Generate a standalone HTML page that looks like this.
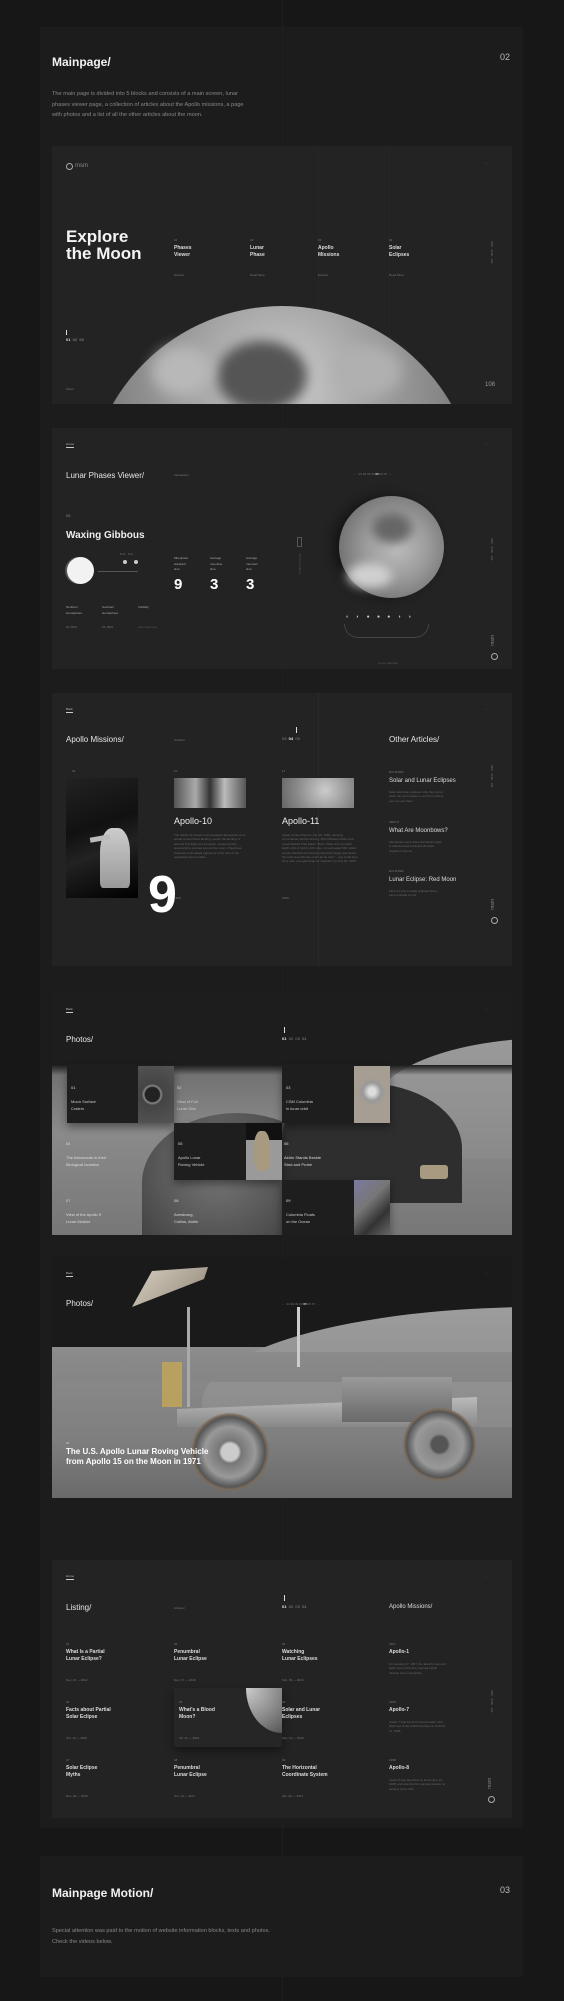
<!DOCTYPE html>
<html><head><meta charset="utf-8">
<style>
*{margin:0;padding:0;box-sizing:border-box}
body{width:564px;height:2001px;background:#171717;font-family:"Liberation Sans",sans-serif;color:#ddd;position:relative;overflow:hidden}
.a{position:absolute}
.band{position:absolute;left:40px;width:483px;background:#1c1c1c}
.card{position:absolute;left:52px;width:460px;background:#232323;overflow:hidden}
.vl{position:absolute;top:0;bottom:0;width:1px;background:#2a2a2a}
.t{position:absolute;white-space:nowrap}
.s3{font-size:3px;color:#777}
.s4{font-size:4px;color:#888}
.s5{font-size:5px;color:#ddd;line-height:7px;font-weight:bold}
.h8{font-size:8px;color:#e6e6e6}
.p{font-size:3px;color:#666;line-height:4.4px;white-space:normal}
.tile{position:absolute;background:#1e1e1e;box-shadow:0 4px 8px rgba(0,0,0,.4)}
.ul{border-bottom:1px solid #ccc;padding-bottom:1px}
</style></head><body>

<div class="band" style="top:27px;height:1801px"></div>
<div class="a" style="left:282px;top:0;width:1px;height:2001px;background:#1f1f1f"></div>
<div class="band" style="top:1856px;height:121px"></div>

<!-- header 1 -->
<div class="t" style="left:52px;top:55px;font-size:12px;font-weight:bold;color:#f2f2f2">Mainpage/</div>
<div class="t" style="left:500px;top:52px;font-size:9px;color:#bbb">02</div>
<div class="a p" style="left:52px;top:89px;width:200px;font-size:5.6px;line-height:10.5px;color:#888">The main page is divided into 5 blocks and consists of a main screen, lunar phases viewer page, a collection of articles about the Apollo missions, a page with photos and a list of all the other articles about the moon.</div>

<!-- card1 -->
<div class="card" style="top:146px;height:258px">
 <div class="vl" style="left:266px;background:#262626"></div>
 <div class="vl" style="left:337px;background:#262626"></div>
 <div class="a" style="left:14px;top:17px;width:7px;height:7px;border:1px solid #aaa;border-radius:50%"></div>
 <div class="t" style="left:23px;top:17px;font-size:6px;color:#888">msm</div>
 <div class="t s3" style="left:433px;top:15px">◦ ◦</div>
 <div class="t" style="left:14px;top:82px;font-size:17px;font-weight:bold;line-height:17px;color:#f4f4f4;white-space:normal;width:80px">Explore the Moon</div>
 <div class="t s3" style="left:122px;top:92px">01</div><div class="t s5" style="left:122px;top:99px">Phases<br>Viewer</div><div class="t s3" style="left:122px;top:127px">Explore</div>
 <div class="t s3" style="left:198px;top:92px">02</div><div class="t s5" style="left:198px;top:99px">Lunar<br>Phase</div><div class="t s3" style="left:198px;top:127px">Read More</div>
 <div class="t s3" style="left:266px;top:92px">03</div><div class="t s5" style="left:266px;top:99px">Apollo<br>Missions</div><div class="t s3" style="left:266px;top:127px">Explore</div>
 <div class="t s3" style="left:337px;top:92px">04</div><div class="t s5" style="left:337px;top:99px">Solar<br>Eclipses</div><div class="t s3" style="left:337px;top:127px">Read More</div>
 <div class="a" style="left:14px;top:184px;width:1px;height:5px;background:#ddd"></div>
 <div class="t" style="left:14px;top:191px;font-size:4px;color:#ddd;font-weight:bold">01 <span style="color:#777">&nbsp;02 &nbsp;03</span></div>
 <div class="t s3" style="left:14px;top:241px">About</div>
 <div class="t" style="left:433px;top:236px;font-size:6px;color:#999">108</div>
 <div class="t s3" style="left:438px;top:95px;writing-mode:vertical-rl">SEP · AUG · JUL</div>
 <div class="a" style="left:35px;top:160px;width:390px;height:390px;border-radius:50%;background:radial-gradient(circle at 50% 20%,#cfcfcf 0,#9a9a9a 30%,#6d6d6d 60%,#4a4a4a 100%)"></div>
 <div class="a" style="left:165px;top:195px;width:90px;height:70px;border-radius:50%;background:#555;filter:blur(6px)"></div>
 <div class="a" style="left:100px;top:200px;width:60px;height:50px;border-radius:50%;background:#b8b8b8;filter:blur(7px)"></div>
 <div class="a" style="left:280px;top:200px;width:70px;height:50px;border-radius:50%;background:#b0b0b0;filter:blur(7px)"></div>
</div>

<!-- card2 -->
<div class="card" style="top:428px;height:241px">
 <div class="t s3 ul" style="left:14px;top:14px;color:#bbb">Home</div>
 <div class="t s3" style="left:433px;top:14px">◦ ◦</div>
 <div class="t h8" style="left:14px;top:43px">Lunar Phases Viewer/</div>
 <div class="t s3" style="left:122px;top:45px">Interaction/</div>
 <div class="t s3" style="left:302px;top:44px">←&nbsp; 01 02 03 04 <b style="color:#ddd">05</b> 06 07 &nbsp;→</div>
 <div class="t s4" style="left:14px;top:85px">05</div>
 <div class="t" style="left:14px;top:102px;font-size:10px;font-weight:bold;color:#eee">Waxing Gibbous</div>
 <div class="a" style="left:15px;top:129px;width:27px;height:27px;border-radius:50%;background:#f2f2f2;box-shadow:-2px 0 0 #555"></div>
 <div class="a" style="left:46px;top:143px;width:40px;height:1px;background:#555"></div>
 <div class="t s3" style="left:68px;top:124px">N.H. &nbsp;S.H.</div>
 <div class="a" style="left:71px;top:132px;width:4px;height:4px;border-radius:50%;background:#ccc"></div>
 <div class="a" style="left:82px;top:132px;width:4px;height:4px;border-radius:50%;background:#ccc"></div>
 <div class="t s3" style="left:122px;top:128px;line-height:5.5px;color:#aaa">Mid-phase<br>standard<br>time</div>
 <div class="t s3" style="left:158px;top:128px;line-height:5.5px;color:#aaa">Average<br>moonrise<br>time</div>
 <div class="t s3" style="left:194px;top:128px;line-height:5.5px;color:#aaa">Average<br>moonset<br>time</div>
 <div class="t" style="left:122px;top:148px;font-size:15px;font-weight:bold;color:#fff">9</div>
 <div class="t" style="left:158px;top:148px;font-size:15px;font-weight:bold;color:#fff">3</div>
 <div class="t" style="left:194px;top:148px;font-size:15px;font-weight:bold;color:#fff">3</div>
 <div class="t s3" style="left:14px;top:177px;line-height:5.5px;color:#aaa">Northern<br>Hemisphere</div>
 <div class="t s3" style="left:50px;top:177px;line-height:5.5px;color:#aaa">Southern<br>Hemisphere</div>
 <div class="t s3" style="left:86px;top:177px;color:#aaa">Visibility</div>
 <div class="t s3" style="left:14px;top:197px">51–69%</div><div class="t s3" style="left:50px;top:197px">51–69%</div><div class="t s3" style="left:86px;top:197px;color:#555">Late afternoon</div>
 <div class="a" style="left:245px;top:109px;width:5px;height:10px;border:1px solid #555"></div>
 <div class="t s3" style="left:246px;top:125px;writing-mode:vertical-rl;color:#555">Scroll to explore</div>
 <div class="a" style="left:287px;top:68px;width:105px;height:102px;border-radius:50%;background:radial-gradient(circle at 55% 50%,#bdbdbd 0,#9c9c9c 40%,#6e6e6e 80%,#333 100%);box-shadow:-6px 0 10px #151515"></div>
 <div class="a" style="left:320px;top:85px;width:40px;height:30px;border-radius:50%;background:#666;filter:blur(5px)"></div>
 <div class="a" style="left:295px;top:135px;width:45px;height:25px;border-radius:50%;background:#d0d0d0;filter:blur(5px)"></div>
 <div class="a" style="left:292px;top:196px;width:85px;height:14px;border:1px solid #444;border-top:none;border-radius:0 0 40px 40px"></div>
 <div class="t" style="left:294px;top:186px;font-size:5px;color:#ccc;letter-spacing:7.3px">◐◐●●●◑◑</div>
 <div class="t s3" style="left:377px;top:223px;color:#555">○</div>
 <div class="t s3" style="left:326px;top:233px;color:#555">Lunar calendar</div>
 <div class="t s3" style="left:438px;top:110px;writing-mode:vertical-rl">SEP · AUG · JUL</div>
 <div class="a" style="left:439px;top:225px;width:7px;height:7px;border:1px solid #aaa;border-radius:50%"></div>
 <div class="t" style="left:438px;top:207px;font-size:5px;color:#888;writing-mode:vertical-rl;transform:rotate(180deg)">msm</div>
</div>

<!-- card3 -->
<div class="card" style="top:693px;height:273px">
 <div class="vl" style="left:266px"></div>
 <div class="t s3 ul" style="left:14px;top:14px;color:#bbb">Back</div>
 <div class="t s3" style="left:433px;top:14px">◦ ◦</div>
 <div class="t h8" style="left:14px;top:42px">Apollo Missions/</div>
 <div class="t s3" style="left:122px;top:45px">Articles/</div>
 <div class="a" style="left:244px;top:34px;width:1px;height:6px;background:#ddd"></div>
 <div class="t s4" style="left:230px;top:43px">03 &nbsp;<b style="color:#eee">04</b> &nbsp;05</div>
 <div class="t h8" style="left:337px;top:42px">Other Articles/</div>
 <div class="t s3" style="left:20px;top:76px">09</div>
 <div class="a" style="left:14px;top:85px;width:72px;height:120px;background:linear-gradient(160deg,#222 0,#111 40%,#222 60%,#000 100%)"></div>
 <div class="a" style="left:48px;top:135px;width:30px;height:60px;border-radius:40% 40% 10% 10%;background:linear-gradient(#ccc,#999)"></div>
 <div class="a" style="left:38px;top:143px;width:20px;height:5px;background:#bbb;transform:rotate(-10deg)"></div>
 <div class="t" style="left:96px;top:176px;font-size:52px;font-weight:900;color:#fff;line-height:52px">9</div>
 <div class="t s3" style="left:122px;top:76px">10</div>
 <div class="a" style="left:122px;top:85px;width:72px;height:30px;background:linear-gradient(90deg,#555,#aaa 30%,#333 50%,#bbb 70%,#555)"></div>
 <div class="t" style="left:122px;top:123px;font-size:9px;color:#eee">Apollo-10</div>
 <div class="a p" style="left:122px;top:140px;width:72px">The Apollo 10 mission encompassed all aspects of an actual crewed lunar landing, except the landing. It was the first flight of a complete, crewed Apollo spacecraft to operate around the moon. Objectives included a scheduled eight-hour lunar orbit of the separated lunar module.</div>
 <div class="t s3" style="left:122px;top:203px">1969</div>
 <div class="t s3" style="left:230px;top:76px">11</div>
 <div class="a" style="left:230px;top:85px;width:72px;height:30px;background:radial-gradient(circle at 60% 40%,#ccc,#8a8a8a 60%,#666)"></div>
 <div class="t" style="left:230px;top:123px;font-size:9px;color:#eee">Apollo-11</div>
 <div class="a p" style="left:230px;top:140px;width:76px">Apollo 11 launched on July 16, 1969, carrying Commander Neil Armstrong, Pilot Michael Collins and Lunar Module Pilot Edwin "Buzz" Aldrin into an initial Earth orbit of 114 by 116 miles. An estimated 530 million people watched Armstrong's televised image and heard his voice describe the event as he took "...one small step for a man, one giant leap for mankind" on July 20, 1969.</div>
 <div class="t s3" style="left:230px;top:203px">1969</div>
 <div class="t s3" style="left:337px;top:77px">ECLIPSES</div>
 <div class="t" style="left:337px;top:85px;font-size:6px;color:#ddd">Solar and Lunar Eclipses</div>
 <div class="a p" style="left:337px;top:97px;width:55px">Solar and lunar eclipses: why they occur, when the next eclipse is, and from where you can see them.</div>
 <div class="t s3" style="left:337px;top:127px">ABOUT</div>
 <div class="t" style="left:337px;top:135px;font-size:6px;color:#ddd">What Are Moonbows?</div>
 <div class="a p" style="left:337px;top:147px;width:55px">Moonbows occur when the Moon's light is reflected and refracted off water droplets in the air.</div>
 <div class="t s3" style="left:337px;top:176px">ECLIPSES</div>
 <div class="t" style="left:337px;top:184px;font-size:6px;color:#ddd">Lunar Eclipse: Red Moon</div>
 <div class="a p" style="left:337px;top:196px;width:55px">Find out why a totally eclipsed Moon turns a shade of red.</div>
 <div class="t s3" style="left:438px;top:72px;writing-mode:vertical-rl">SEP · AUG · JUL</div>
 <div class="a" style="left:439px;top:224px;width:7px;height:7px;border:1px solid #aaa;border-radius:50%"></div>
 <div class="t" style="left:438px;top:206px;font-size:5px;color:#888;writing-mode:vertical-rl;transform:rotate(180deg)">msm</div>
</div>

<!-- card4 photos -->
<div class="card" style="top:993px;height:242px;background:#1d1d1d">
 <div class="a" style="left:0;top:72px;width:460px;height:170px;background:linear-gradient(180deg,#6e6e6e,#8a8a8a 40%,#777 100%)"></div>
 <div class="a" style="left:320px;top:45px;width:300px;height:120px;border-radius:60% 0 0 0;background:linear-gradient(#9a9a9a,#8a8a8a)"></div>
 <div class="a" style="left:90px;top:120px;width:190px;height:140px;border-radius:50% 50% 0 0;background:radial-gradient(circle at 40% 40%,#777,#444 70%)"></div>
 <div class="a" style="left:230px;top:90px;width:180px;height:120px;border-radius:50% 60% 0 0;background:#2e2e2e"></div>
 <div class="a" style="left:0;top:72px;width:460px;height:10px;background:linear-gradient(#1d1d1d,transparent)"></div>
 <div class="t s3 ul" style="left:14px;top:14px;color:#bbb">Back</div>
 <div class="t s3" style="left:433px;top:14px">◦ ◦</div>
 <div class="t h8" style="left:14px;top:42px">Photos/</div>
 <div class="a" style="left:232px;top:34px;width:1px;height:6px;background:#ddd"></div>
 <div class="t s4" style="left:230px;top:43px"><b style="color:#eee">01</b> &nbsp;02 &nbsp;03 &nbsp;04</div>
 <div class="tile" style="left:15px;top:73px;width:107px;height:57px"><div class="a" style="left:71px;top:0;width:36px;height:57px;background:radial-gradient(circle at 40% 50%,#222 20%,#888 24%,#444 30%,#555)"></div></div>
 <div class="tile" style="left:230px;top:73px;width:108px;height:57px"><div class="a" style="left:72px;top:0;width:36px;height:57px;background:radial-gradient(circle at 50% 45%,#ddd 10%,#999 25%,#a69e92 40%)"></div></div>
 <div class="tile" style="left:122px;top:130px;width:108px;height:57px"><div class="a" style="left:72px;top:0;width:36px;height:57px;background:linear-gradient(#111 30%,#9a9a9a 30%)"></div><div class="a" style="left:80px;top:8px;width:16px;height:40px;background:#a89a80;border-radius:40% 40% 30% 30%"></div></div>
 <div class="tile" style="left:230px;top:187px;width:108px;height:55px"><div class="a" style="left:72px;top:0;width:36px;height:55px;background:linear-gradient(135deg,#7a7aa0,#777 40%,#333 70%,#666)"></div></div>
 <div class="t s4" style="left:19px;top:92px;color:#ddd">01</div><div class="t s4" style="left:19px;top:105px;line-height:7px;color:#ccc">Moon Surface<br>Craters</div>
 <div class="t s4" style="left:125px;top:92px;color:#ddd">02</div><div class="t s4" style="left:125px;top:105px;line-height:7px;color:#ccc">View of Full<br>Lunar Disc</div>
 <div class="t s4" style="left:234px;top:92px;color:#ddd">03</div><div class="t s4" style="left:234px;top:105px;line-height:7px;color:#ccc">CSM Columbia<br>in lunar orbit</div>
 <div class="t s4" style="left:14px;top:148px;color:#ddd">04</div><div class="t s4" style="left:14px;top:161px;line-height:7px;color:#ddd">The Astronauts in their<br>Biological Isolation</div>
 <div class="t s4" style="left:126px;top:148px;color:#ddd">05</div><div class="t s4" style="left:126px;top:161px;line-height:7px;color:#ccc">Apollo Lunar<br>Roving Vehicle</div>
 <div class="t s4" style="left:232px;top:148px;color:#ddd">06</div><div class="t s4" style="left:232px;top:161px;line-height:7px;color:#ddd">Aldrin Stands Beside<br>Strut and Probe</div>
 <div class="t s4" style="left:14px;top:205px;color:#ddd">07</div><div class="t s4" style="left:14px;top:218px;line-height:7px;color:#ddd">View of the Apollo 9<br>Lunar Module</div>
 <div class="t s4" style="left:122px;top:205px;color:#ddd">08</div><div class="t s4" style="left:122px;top:218px;line-height:7px;color:#ddd">Armstrong,<br>Collins, Aldrin</div>
 <div class="t s4" style="left:234px;top:205px;color:#ddd">09</div><div class="t s4" style="left:234px;top:218px;line-height:7px;color:#ccc">Columbia Floats<br>on the Ocean</div>
 <div class="a" style="left:368px;top:172px;width:28px;height:14px;background:#a89a80;border-radius:3px"></div>
</div>

<!-- card5 rover -->
<div class="card" style="top:1257px;height:241px;background:#1a1a1a">
 <div class="a" style="left:0;top:90px;width:460px;height:151px;background:linear-gradient(#8d8d8d,#7f7f7f 60%,#6a6a6a)"></div>
 <div class="a" style="left:150px;top:50px;width:420px;height:120px;border-radius:80% 0 0 0;background:linear-gradient(#9c9c9c,#8a8a8a)"></div>
 <div class="a" style="left:0;top:95px;width:460px;height:30px;background:linear-gradient(#8a8a8a,#868686)"></div>
 <!-- rover -->
 <div class="a" style="left:80px;top:10px;width:80px;height:40px;background:linear-gradient(135deg,#d9cfc0,#8f8576);clip-path:polygon(0 100%,25% 10%,95% 0,90% 30%);"></div>
 <div class="a" style="left:135px;top:50px;width:3px;height:100px;background:#aaa"></div>
 <div class="a" style="left:245px;top:50px;width:3px;height:60px;background:#ccc"></div>
 <div class="a" style="left:110px;top:105px;width:20px;height:45px;background:#b8a060"></div>
 <div class="a" style="left:125px;top:140px;width:300px;height:30px;background:linear-gradient(#bbb,#888);clip-path:polygon(0 40%,100% 0,100% 100%,0 100%)"></div>
 <div class="a" style="left:290px;top:120px;width:110px;height:45px;background:linear-gradient(#9a9a9a,#6a6a6a)"></div>
 <div class="a" style="left:138px;top:155px;width:80px;height:80px;border-radius:50%;background:radial-gradient(circle,#ccc 15%,#777 20%,#999 45%,#555 62%,#7b6a5a 66%,transparent 70%)"></div>
 <div class="a" style="left:350px;top:150px;width:75px;height:75px;border-radius:50%;background:radial-gradient(circle,#555 15%,#888 20%,#999 45%,#555 62%,#7b6a5a 66%,transparent 70%)"></div>
 <div class="t s3 ul" style="left:14px;top:14px;color:#bbb">Back</div>
 <div class="t s3" style="left:433px;top:14px">◦ ◦</div>
 <div class="t h8" style="left:14px;top:42px">Photos/</div>
 <div class="t s3" style="left:230px;top:45px">←&nbsp; 01 02 03 04 <b style="color:#ddd">05</b> 06 07 &nbsp;→</div>
 <div class="t s3" style="left:14px;top:184px;color:#ccc">05</div>
 <div class="t" style="left:14px;top:190px;font-size:8px;font-weight:bold;line-height:10px;color:#fff">The U.S. Apollo Lunar Roving Vehicle<br>from Apollo 15 on the Moon in 1971</div>
</div>

<!-- card6 listing -->
<div class="card" style="top:1560px;height:258px">
 <div class="t s3 ul" style="left:14px;top:14px;color:#bbb">Home</div>
 <div class="t s3" style="left:433px;top:14px">◦ ◦</div>
 <div class="t h8" style="left:14px;top:43px">Listing/</div>
 <div class="t s3" style="left:122px;top:46px">Articles/</div>
 <div class="a" style="left:232px;top:35px;width:1px;height:6px;background:#ddd"></div>
 <div class="t s4" style="left:230px;top:44px"><b style="color:#eee">01</b> &nbsp;02 &nbsp;03 &nbsp;04</div>
 <div class="t" style="left:337px;top:44px;font-size:6px;color:#ddd">Apollo Missions/</div>
 <div class="tile" style="left:122px;top:128px;width:108px;height:59px;background:#262626"><div class="a" style="left:72px;top:0;width:36px;height:45px;border-radius:0 0 0 100%;background:radial-gradient(circle at 0 0,#ccc,#888 60%,#555)"></div></div>
 <div class="t s3" style="left:14px;top:82px">01</div><div class="t s5" style="left:14px;top:89px">What Is a Partial<br>Lunar Eclipse?</div><div class="t s3" style="left:14px;top:118px">Nov. 24 — 2013</div>
 <div class="t s3" style="left:122px;top:82px">02</div><div class="t s5" style="left:122px;top:89px">Penumbral<br>Lunar Eclipse</div><div class="t s3" style="left:122px;top:118px">Dec. 17 — 2016</div>
 <div class="t s3" style="left:230px;top:82px">03</div><div class="t s5" style="left:230px;top:89px">Watching<br>Lunar Eclipses</div><div class="t s3" style="left:230px;top:118px">Feb. 09 — 2016</div>
 <div class="t s3" style="left:337px;top:82px">1967</div><div class="t s5" style="left:337px;top:89px">Apollo-1</div><div class="a p" style="left:337px;top:102px;width:58px">On January 27, 1967, the launch crew and flight crew of the first manned Apollo mission were conducting</div>
 <div class="t s3" style="left:14px;top:140px">04</div><div class="t s5" style="left:14px;top:147px">Facts about Partial<br>Solar Eclipse</div><div class="t s3" style="left:14px;top:176px">Oct. 19 — 2015</div>
 <div class="t s3" style="left:127px;top:140px">05</div><div class="t s5" style="left:127px;top:147px">What's a Blood<br>Moon?</div><div class="t s3" style="left:127px;top:176px">Jul. 21 — 2016</div>
 <div class="t s3" style="left:230px;top:140px">06</div><div class="t s5" style="left:230px;top:147px">Solar and Lunar<br>Eclipses</div><div class="t s3" style="left:230px;top:176px">Sep. 10 — 2016</div>
 <div class="t s3" style="left:337px;top:140px">1968</div><div class="t s5" style="left:337px;top:147px">Apollo-7</div><div class="a p" style="left:337px;top:160px;width:58px">Apollo 7 was the first manned earth orbit flight test of the CSM launched on October 11, 1968</div>
 <div class="t s3" style="left:14px;top:198px">07</div><div class="t s5" style="left:14px;top:205px">Solar Eclipse<br>Myths</div><div class="t s3" style="left:14px;top:234px">Dec. 20 — 2016</div>
 <div class="t s3" style="left:122px;top:198px">08</div><div class="t s5" style="left:122px;top:205px">Penumbral<br>Lunar Eclipse</div><div class="t s3" style="left:122px;top:234px">Jun. 14 — 2017</div>
 <div class="t s3" style="left:230px;top:198px">09</div><div class="t s5" style="left:230px;top:205px">The Horizontal<br>Coordinate System</div><div class="t s3" style="left:230px;top:234px">Jan. 02 — 2017</div>
 <div class="t s3" style="left:337px;top:198px">1968</div><div class="t s5" style="left:337px;top:205px">Apollo-8</div><div class="a p" style="left:337px;top:218px;width:58px">Apollo 8 was launched on December 21, 1968, and was the first manned mission to achieve lunar orbit</div>
 <div class="t s3" style="left:438px;top:130px;writing-mode:vertical-rl">SEP · AUG · JUL</div>
 <div class="a" style="left:436px;top:236px;width:7px;height:7px;border:1px solid #aaa;border-radius:50%"></div>
 <div class="t" style="left:435px;top:218px;font-size:5px;color:#888;writing-mode:vertical-rl;transform:rotate(180deg)">msm</div>
</div>

<!-- motion header -->
<div class="t" style="left:52px;top:1886px;font-size:12px;font-weight:bold;color:#f2f2f2">Mainpage Motion/</div>
<div class="t" style="left:500px;top:1885px;font-size:9px;color:#bbb">03</div>
<div class="a p" style="left:52px;top:1926px;width:220px;font-size:5.6px;line-height:10.5px;color:#888">Special attention was paid to the motion of website information blocks, texts and photos. Check the videos below.</div>
</body></html>
